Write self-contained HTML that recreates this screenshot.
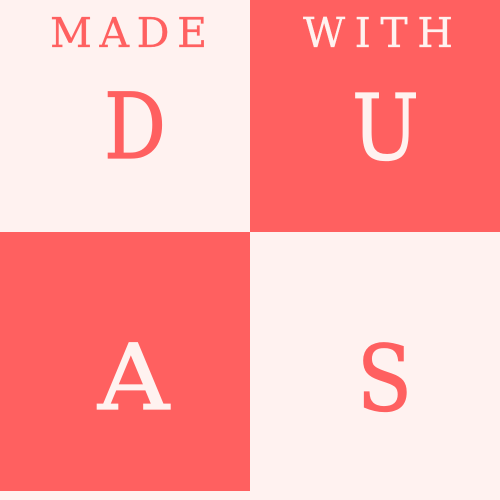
<!DOCTYPE html>
<html><head><style>
html,body{margin:0;padding:0;background:#FFF2F0;}
svg{display:block;}
text{font-family:"DejaVu Serif","Liberation Serif",serif;}
</style></head><body>
<svg width="500" height="500" viewBox="0 0 500 500" xmlns="http://www.w3.org/2000/svg">
<rect width="500" height="500" fill="#FFF2F0"/>
<rect x="250" y="0" width="250" height="232" fill="#FF6060"/>
<rect x="0" y="232" width="250" height="259" fill="#FF6060"/>
<text x="50" y="47" font-size="41" fill="#FF6060" stroke="#FF6060" stroke-width="0.3" textLength="157" lengthAdjust="spacing">MADE</text>
<text x="303" y="47" font-size="41" fill="#FFF2F0" stroke="#FFF2F0" stroke-width="0.3" textLength="150" lengthAdjust="spacing">WITH</text>
<text x="104" y="158" font-size="91" fill="#FF6060" stroke="#FF6060" stroke-width="1.3" textLength="62" lengthAdjust="spacingAndGlyphs">D</text>
<text x="352" y="159" font-size="91" fill="#FFF2F0" stroke="#FFF2F0" stroke-width="1.3" textLength="67" lengthAdjust="spacingAndGlyphs">U</text>
<text x="98" y="409" font-size="91" fill="#FFF2F0" stroke="#FFF2F0" stroke-width="1.3" textLength="71" lengthAdjust="spacingAndGlyphs">A</text>
<text x="357" y="410" font-size="91" fill="#FF6060" stroke="#FF6060" stroke-width="1.3" textLength="55" lengthAdjust="spacingAndGlyphs">S</text>
</svg>
</body></html>
